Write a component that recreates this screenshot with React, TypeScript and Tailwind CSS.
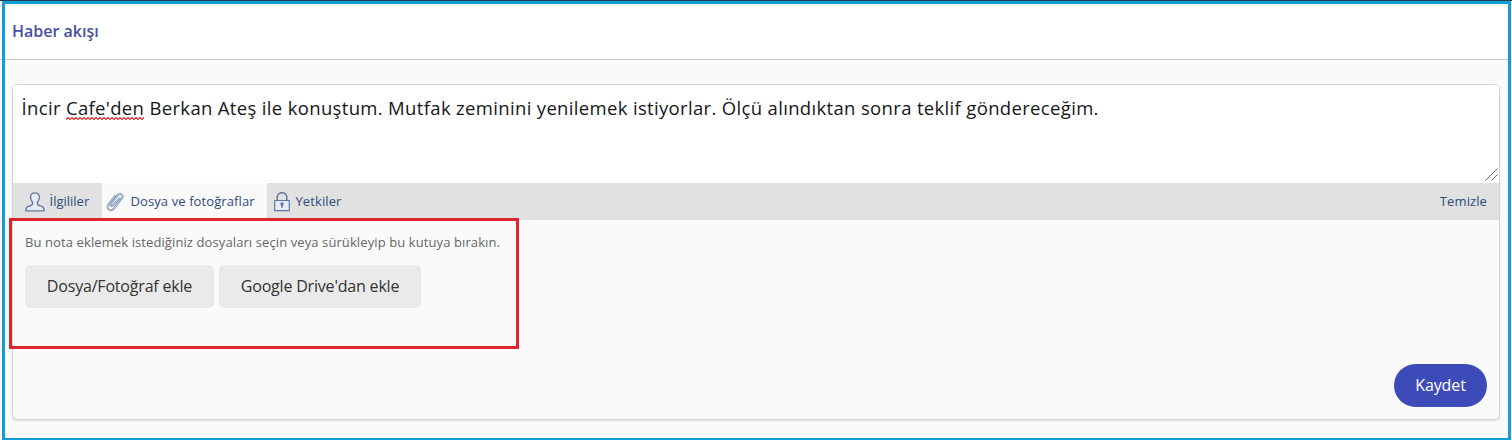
import type { ReactNode } from "react";

function PersonIcon() {
  return (
    <svg width="20" height="20" viewBox="0 0 20 20" fill="#e6ecf5" stroke="#60789f" strokeWidth="1.3" strokeLinejoin="round">
      <path d="M10 .8C7.2.8 5.4 2.6 5.6 5.4c.1 2.1.8 3.7 2 4.9.3 1.6-.2 2.5-1.6 3.1l-3.2 1.2C1.4 15.2.9 16.6.8 18.9h18.4c-.1-2.3-.6-3.7-2-4.3L14 13.4c-1.4-.6-1.9-1.5-1.6-3.1 1.2-1.2 1.9-2.8 2-4.9C14.6 2.6 12.8.8 10 .8Z" />
    </svg>
  );
}

const clipPath =
  "M13.5 6.3 7 13.3c-1.5 1.6-3.3 0-2-1.5L11.6 3.3c2.6-3 6.6 0 4.2 3.2L8 16.4c-3.1 3.9-8.7.2-5.6-4L9.3 3.7";

function ClipIcon() {
  return (
    <svg width="18" height="20" viewBox="0 0 18 20" fill="none" strokeLinecap="round" strokeLinejoin="round">
      <path d={clipPath} stroke="#7f94b9" strokeWidth="1.9" />
      <path d={clipPath} stroke="#dbe4f1" strokeWidth=".6" />
    </svg>
  );
}

function LockIcon() {
  return (
    <svg width="16" height="20" viewBox="0 0 16 20" fill="none" stroke="#60789f" strokeWidth="1.2">
      <path d="M3.2 8.4V5.6c0-6.4 9.6-6.4 9.6 0v2.8" strokeWidth="1.5" />
      <path d="M.7 8.5h14.6v10.2H.7z" fill="#e6ecf5" />
      <path d="M8 12.5v3.3" strokeWidth="1.5" />
      <circle cx="8" cy="12" r="1.1" fill="#60789f" />
    </svg>
  );
}

// spell checker mark, one zigzag every 4px
function Squiggle() {
  return (
    <svg className="absolute bottom-[2px] left-0 h-[3px] w-full" fill="none" stroke="#d81e1e" strokeWidth="1.1">
      <defs>
        <pattern id="squiggle" width="4" height="3" patternUnits="userSpaceOnUse">
          <path d="M-1 1.5 0 2.5 2 .5 4 2.5 5 1.5" />
        </pattern>
      </defs>
      <rect width="100%" height="3" fill="url(#squiggle)" stroke="none" />
    </svg>
  );
}

function Tab({ icon, label, className = "" }: { icon: ReactNode; label: string; className?: string }) {
  return (
    <button className={`flex h-full items-center text-[13px] text-[#2f4a7d] ${className}`}>
      {icon}
      <span className="whitespace-nowrap">{label}</span>
    </button>
  );
}

export default function App() {
  return (
    <div className="relative h-[440px] w-[1512px] overflow-hidden bg-[#fafafa] font-['Open_Sans',sans-serif]">
      <header className="flex h-[60px] items-center border-b border-[#cbcbcb] bg-white pt-[3px] pl-3">
        <h1 className="text-base font-semibold text-[#4a4ea3]">Haber akışı</h1>
      </header>

      <main className="pt-6 pl-3">
        <section className="flex h-[336px] w-[1488px] flex-col rounded-[5px] border border-[#d5d5d5] bg-[#fafafa] shadow-[0_1px_2px_rgba(0,0,0,0.12)]">
          <div className="relative h-[98px] rounded-t bg-white px-[8.5px] pt-[9px]">
            <p className="text-[18.5px] leading-7 tracking-[0.335px] whitespace-nowrap text-[#171717]">
              İncir{" "}
              <span className="relative inline-block h-7 align-top">
                Cafe'den
                <Squiggle />
              </span>{" "}
              Berkan Ateş ile konuştum. Mutfak zeminini yenilemek istiyorlar. Ölçü alındıktan sonra teklif göndereceğim.
            </p>
            <svg className="absolute right-px bottom-0.5" width="13" height="13" viewBox="0 0 13 13" stroke="#555" strokeWidth=".9">
              <path d="M.5 12.5 12.5.5M6.5 12.5l6-6" />
            </svg>
          </div>

          <nav className="flex h-[37px] items-center bg-[#e1e1e1]">
            <Tab icon={<PersonIcon />} label="İlgililer" className="w-[89px] gap-[4.5px] pl-3" />
            <Tab icon={<ClipIcon />} label="Dosya ve fotoğraflar" className="w-[165px] gap-[6.5px] bg-[#fafafa] pl-1 tracking-[0.1px]" />
            <Tab icon={<LockIcon />} label="Yetkiler" className="gap-[5.5px] pl-[7px] tracking-[0.1px]" />
            <button className="mr-3 ml-auto text-[13px] tracking-[0.1px] text-[#2f4a7d]">Temizle</button>
          </nav>

          <div className="flex flex-1 flex-col items-start px-3 pt-[13px] pb-3">
            <p className="text-[13px] leading-[18px] tracking-[0.1px] text-[#666]">
              Bu nota eklemek istediğiniz dosyaları seçin veya sürükleyip bu kutuya bırakın.
            </p>
            <div className="mt-[14px] flex gap-[5px] text-base tracking-[-0.19px] text-[#333]">
              <button className="h-[43px] w-[189px] rounded-[5px] bg-[#eaeaea] pb-0.5">Dosya/Fotoğraf ekle</button>
              <button className="h-[43px] w-[202px] rounded-[5px] bg-[#eaeaea] pb-0.5">Google Drive'dan ekle</button>
            </div>
            <button className="mt-auto h-[43px] w-[93px] self-end rounded-full bg-[#3d4bb8] pb-0.5 text-base tracking-[-0.1px] text-white">
              Kaydet
            </button>
          </div>
        </section>
      </main>

      {/* highlight around the upload area */}
      <div className="pointer-events-none absolute top-[218px] left-[9px] h-[131px] w-[510px] border-3 border-[#dc252d]" />
      <div className="pointer-events-none absolute top-0 left-0 h-px w-full bg-[#263c4c]" />
      <div className="pointer-events-none absolute top-px left-[2px] h-[440px] w-[1509px] border-3 border-[#129fd9]" />
    </div>
  );
}
